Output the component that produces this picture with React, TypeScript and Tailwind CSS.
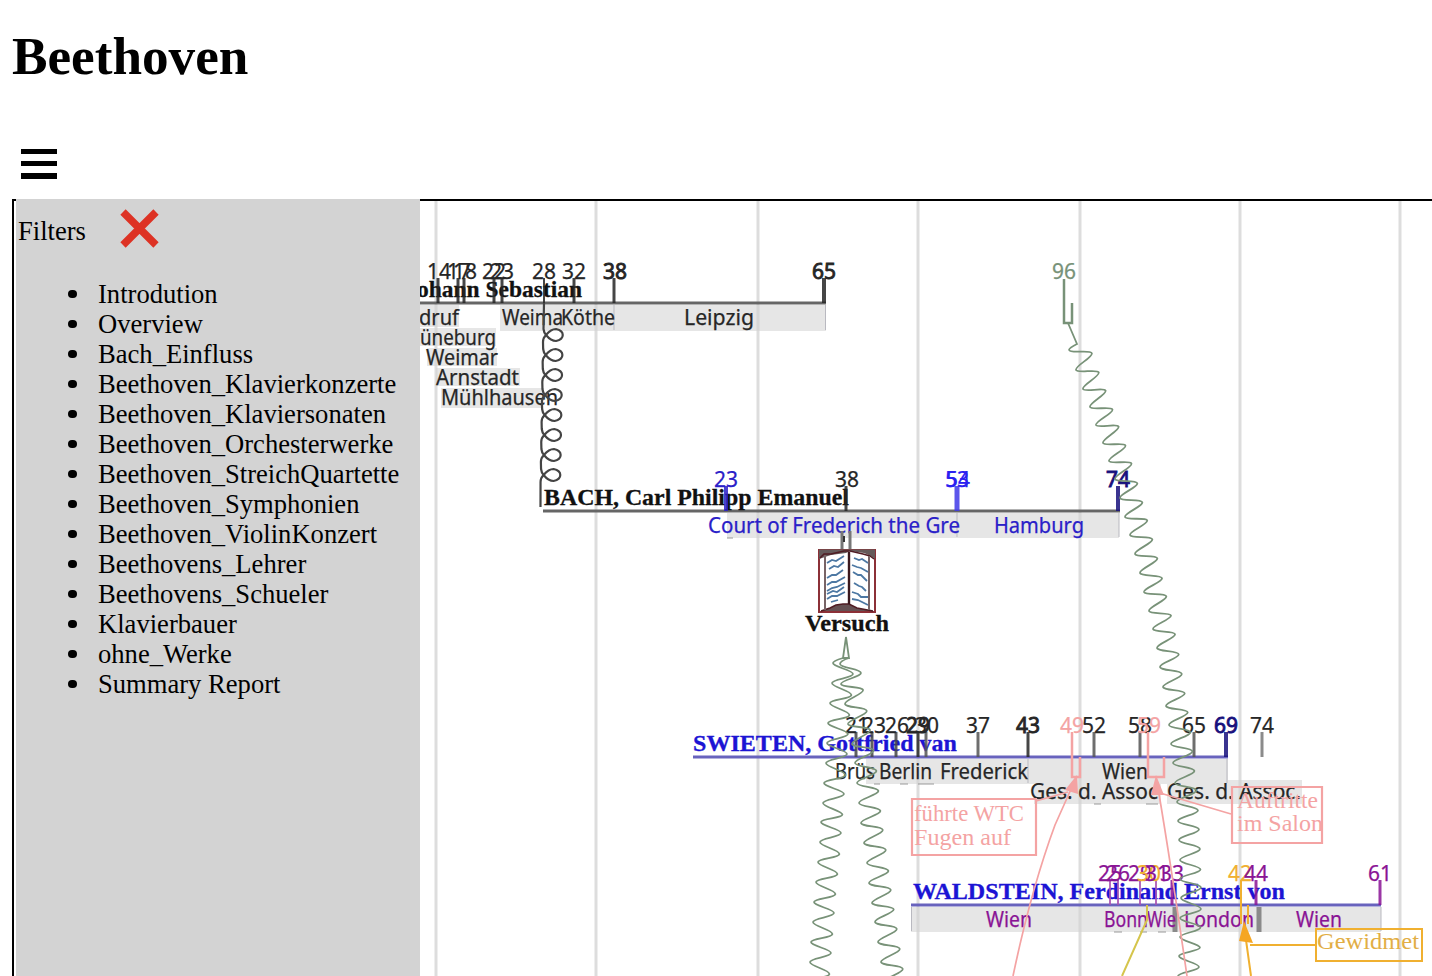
type Label = [text: string, x: number, y: number, width: number, color?: string]
type Point = [x: number, y: number]

const INK = "#262626"
const BLUE = "#2a20c8"
const NAVY = "#17107c"
const PURPLE = "#8a1495"
const PINK = "#f4a3a3"
const GREEN = "#789278"
const GOLD = "#f0b030"

const filters = [
  "Introdution",
  "Overview",
  "Bach_Einfluss",
  "Beethoven_Klavierkonzerte",
  "Beethoven_Klaviersonaten",
  "Beethoven_Orchesterwerke",
  "Beethoven_StreichQuartette",
  "Beethoven_Symphonien",
  "Beethoven_ViolinKonzert",
  "Beethovens_Lehrer",
  "Beethovens_Schueler",
  "Klavierbauer",
  "ohne_Werke",
  "Summary Report",
]

const gridLines = [436, 596, 758, 918, 1080, 1240, 1400]

// x, y, width, height
const bands = [
  [420, 305, 39, 22],
  [420, 328, 76, 18],
  [427, 348, 70, 18],
  [436, 368, 84, 18],
  [441, 388, 102, 20],
  [500, 305, 326, 26],
  [727, 513, 392, 25],
  [866, 759, 362, 25],
  [1034, 784, 127, 20],
  [1167, 780, 135, 24],
  [911, 907, 470, 25],
]

const names: Label[] = [
  ["ohann Sebastian", 417, 297, 165, "#111111"],
  ["BACH, Carl Philipp Emanuel", 544, 505, 305, "#111111"],
  ["Versuch", 805, 631, 84, "#111111"],
  ["SWIETEN, Gottfried van", 693, 751, 264, "#1c14d4"],
  ["WALDSTEIN, Ferdinand Ernst von", 913, 899, 372, "#1c14d4"],
]

const places: Label[] = [
  ["druf", 419, 325, 40],
  ["üneburg", 420, 345, 76],
  ["Weimar", 426, 365, 72],
  ["Arnstadt", 436, 385, 83],
  ["Mühlhausen", 441, 405, 117],
  ["Weima", 502, 325, 61],
  ["Köthe", 561, 325, 54],
  ["Leipzig", 684, 325, 70],
  ["Court of Frederich the Gre", 708, 533, 252, BLUE],
  ["Hamburg", 994, 533, 90, BLUE],
  ["Brüs", 835, 779, 40],
  ["Berlin", 879, 779, 53],
  ["Frederick", 940, 779, 88],
  ["Wien", 1102, 779, 46],
  ["Ges. d. Assoc", 1030, 799, 128],
  ["Ges. d. Assoc.", 1167, 799, 134],
  ["Wien", 986, 927, 46, PURPLE],
  ["Bonn", 1104, 927, 44, PURPLE],
  ["Wie", 1147, 927, 29, PURPLE],
  ["London", 1184, 927, 70, PURPLE],
  ["Wien", 1296, 927, 46, PURPLE],
]

// text, centre, baseline, colour, bold
const years: [string, number, number, string, boolean?][] = [
  ["14", 439, 279, INK],
  ["17", 459, 279, INK],
  ["18", 465, 279, INK],
  ["22", 494, 279, INK],
  ["23", 502, 279, INK],
  ["28", 544, 279, INK],
  ["32", 574, 279, INK],
  ["38", 615, 279, INK, true],
  ["65", 824, 279, INK, true],
  ["96", 1064, 279, GREEN],
  ["23", 726, 487, BLUE],
  ["38", 847, 487, INK],
  ["54", 958, 487, "#2a20f0"],
  ["53", 957, 487, "#2a20f0"],
  ["74", 1118, 487, NAVY, true],
  ["21", 857, 733, INK],
  ["23", 874, 733, INK],
  ["26", 897, 733, INK],
  ["29", 918, 733, INK, true],
  ["30", 927, 733, INK],
  ["37", 978, 733, INK],
  ["43", 1028, 733, INK, true],
  ["49", 1072, 733, PINK],
  ["52", 1094, 733, INK],
  ["58", 1140, 733, INK],
  ["59", 1149, 733, PINK],
  ["65", 1194, 733, INK],
  ["69", 1226, 733, NAVY, true],
  ["74", 1262, 733, INK],
  ["25", 1110, 881, PURPLE],
  ["26", 1118, 881, PURPLE],
  ["29", 1140, 881, PURPLE],
  ["30", 1149, 881, GOLD],
  ["31", 1157, 881, PURPLE],
  ["33", 1172, 881, PURPLE],
  ["42", 1240, 881, GOLD],
  ["44", 1256, 881, PURPLE],
  ["61", 1380, 881, PURPLE],
]

// x, top, colour, width
const ticks: [number, number, string, number][] = [
  [438, 278, INK, 3],
  [458, 278, INK, 3],
  [464, 278, INK, 3],
  [494, 278, INK, 3],
  [502, 278, INK, 3],
  [544, 278, INK, 2],
  [574, 278, INK, 3],
  [614, 278, INK, 3],
  [824, 278, INK, 4],
  [726, 486, BLUE, 4],
  [846, 486, INK, 3],
  [957, 486, "#4038e8", 5],
  [1118, 486, NAVY, 4],
  [856, 732, "#444444", 3],
  [872, 732, "#444444", 3],
  [896, 732, "#444444", 3],
  [918, 732, INK, 3],
  [926, 732, "#555555", 3],
  [978, 732, "#555555", 3],
  [1028, 732, INK, 3],
  [1094, 732, "#555555", 3],
  [1140, 732, "#555555", 3],
  [1194, 732, "#555555", 3],
  [1226, 732, NAVY, 4],
  [1262, 732, "#777777", 3],
  [1110, 880, "#a850b0", 2],
  [1118, 880, "#a850b0", 2],
  [1140, 880, "#a850b0", 2],
  [1156, 880, "#a850b0", 2],
  [1172, 880, PURPLE, 3],
  [1256, 880, PURPLE, 3],
  [1380, 880, PURPLE, 3],
]

const violinWave: Point[] = [
  [1069, 350], [1076, 370], [1083, 389], [1090, 407], [1096, 425], [1103, 443],
  [1109, 461], [1115, 479], [1120, 498], [1125, 517], [1130, 535], [1135, 554],
  [1140, 573], [1144, 592], [1149, 611], [1153, 629], [1157, 648], [1160, 667],
  [1163, 687], [1166, 706], [1169, 725], [1171, 744], [1173, 763], [1175, 783],
  [1177, 802], [1178, 821], [1179, 840], [1180, 860], [1180, 879], [1181, 898],
  [1180, 918], [1180, 937], [1179, 956], [1178, 976],
]
const leftWave: Point[] = [
  [833, 663], [832, 683], [830, 703], [828, 723], [827, 743], [826, 763],
  [824, 783], [823, 803], [821, 822], [820, 842], [818, 862], [816, 882],
  [814, 902], [813, 922], [811, 942], [810, 962], [808, 982],
]
const rightWave: Point[] = [
  [840, 664], [841, 684], [845, 704], [848, 724], [852, 744], [855, 763],
  [857, 783], [859, 803], [861, 823], [864, 843], [867, 863], [869, 883],
  [872, 903], [875, 922], [878, 942], [881, 962], [884, 982],
]

// Waves through the given left crests; the right crests stand square to the run.
const wavePath = (crests: Point[], size = 20.5) => {
  let d = `M${crests[0][0]} ${crests[0][1]}`
  for (let i = 0; i < crests.length - 1; i++) {
    const [x1, y1] = crests[i]
    const [x2, y2] = crests[i + 1]
    const dx = x2 - x1
    const dy = y2 - y1
    const len = Math.hypot(dx, dy)
    const rx = (x1 + x2) / 2 + (size * dy) / len
    const ry = (y1 + y2) / 2 - (size * dx) / len
    const tx = dx * 0.2
    const ty = dy * 0.2
    d += `C${x1 + tx} ${y1 + ty} ${rx - tx} ${ry - ty} ${rx} ${ry}`
    d += `C${rx + tx} ${ry + ty} ${x2 - tx} ${y2 - ty} ${x2} ${y2}`
  }
  return d
}

const coilPath = () => {
  let d = "M544 303"
  for (let i = 0; i < 8; i++) {
    const x = 544 - i * 0.35
    const y = 335 + i * 20
    d += `L${x - 0.5} ${y - 6}Q${x} ${y - 2} ${x + 2} ${y}`
    d += `Q${x + 7} ${y + 6} ${x + 12} ${y + 6}`
    d += `C${x + 21} ${y + 4} ${x + 21} ${y - 4} ${x + 12} ${y - 6}`
    d += `Q${x + 7} ${y - 6} ${x + 2} ${y}Q${x - 1} ${y + 3} ${x - 1} ${y + 7}`
  }
  return d + "L540.5 507"
}

const Book = () => (
  <g fill="none">
    <path d="M842 531V550M850 531V550" stroke="#777" strokeWidth="3" />
    <path d="M844 536V542" stroke="#333" strokeWidth="2" />
    <path d="M819 550H875V612H819Z" fill="#fff" stroke="#8c3037" strokeWidth="2" />
    <path d="M819 549.500H875V559Q870 555 864 553L850 551L846 553L831 555L819 559Z" fill="#655a5a" />
    <path d="M821 611L830 608L836 605L843 604L849 604L857 608L873 611Z" fill="#655052" />
    <path d="M820 558L824 554L831 554L844 551H850L863 554L870 556L874 559" stroke="#501c23" strokeWidth="1.5" />
    <path d="M821 611L830 608L836 605L843 604L849 604L857 608L873 611" stroke="#501c23" strokeWidth="1.5" />
    <path d="M849 552V604" stroke="#3b181d" strokeWidth="2.4" />
    <path d="M825 555V610M869 556V610" stroke="#786466" strokeWidth="2" />
    <path
      d="M827 563L832 560L836 561L844 556M829 569L834 566L838 567L844 562M827 578L832 575L836 575L843 570M827 585L832 582L836 582L845 577M827 591L832 588L837 587L845 583M827 594L833 591L837 592L844 587M827 599L832 596L837 596L845 592M831 602L838 600M854 558L859 560L862 559L868 563M852 565L857 567L861 568L868 572M853 572L858 575L861 575L867 581M854 583L859 586L862 587L866 591M852 592L858 594L861 597L868 597M852 599L858 600L862 602L868 605"
      stroke="#4d78a3"
      strokeWidth="1.8"
    />
  </g>
)

const Chart = () => (
  <svg className="block h-[775px] w-[1012px] shrink-0" viewBox="420 201 1012 775">
    {bands.map(([x, y, width, height]) => (
      <rect key={`${x}-${y}`} x={x} y={y} width={width} height={height} fill="#e6e6e6" />
    ))}
    {gridLines.map((x) => (
      <path key={x} d={`M${x} 201V976`} stroke="#d2d2d2" strokeOpacity="0.75" strokeWidth="3" />
    ))}

    <g fill="none" strokeWidth="3">
      <path d="M420 303H826M543 511H1120" stroke="#666" />
      <path d="M693 757H1228M911 905H1381" stroke="#6863bd" />
      <path d="M1175 907V932M1259 907V932" stroke="#8a8a8a" strokeWidth="5" />
      <path d="M614 305V330M825.500 305V330M957 513V537M1119 513V537M1028 759V783M1227 759V783M1381 907V931M911.500 907V931" stroke="#b9b9c0" strokeWidth="1" />
      <path d="M727 538H733M874 784H880M900 784H908M918 784H934M1094 804H1101M1146 804H1158M1114 932H1122M1140 932H1147M1158 932H1166" stroke="#999" strokeWidth="1" />
    </g>

    {names.map(([text, x, y, width, color]) => (
      <text
        key={text}
        x={x}
        y={y}
        textLength={width}
        lengthAdjust="spacingAndGlyphs"
        fill={color}
        stroke={color}
        strokeWidth="0.3"
        className="font-['Liberation_Serif',serif] text-[24px] font-bold"
      >
        {text}
      </text>
    ))}
    {ticks.map(([x, y, color, width]) => (
      <path key={`${x}-${y}`} d={`M${x} ${y}V${y + 25}`} stroke={color} strokeWidth={width} strokeOpacity="0.85" />
    ))}
    {places.map(([text, x, y, width, color = INK]) => (
      <text
        key={`${text}-${x}`}
        x={x}
        y={y}
        textLength={width}
        lengthAdjust="spacingAndGlyphs"
        fill={color}
        stroke={color}
        strokeWidth="0.25"
        className="font-['Noto_Sans',sans-serif] text-[21px]"
      >
        {text}
      </text>
    ))}
    {years.map(([text, x, y, color, bold]) => (
      <text
        key={`${x}-${y}`}
        x={x - 12}
        y={y}
        textLength={24}
        lengthAdjust="spacingAndGlyphs"
        fill={color}
        stroke={color}
        strokeWidth={bold ? 0.9 : 0.25}
        className="font-['Noto_Sans',sans-serif] text-[22px]"
      >
        {text}
      </text>
    ))}

    <path d={coilPath()} fill="none" stroke="#444" strokeWidth="2.2" />

    <g fill="none" stroke={GREEN} strokeWidth="1.8">
      <path d="M1064 279V323H1072V303" strokeWidth="2.500" />
      <path d="M1068 323L1077 344Q1069 348 1069 350" />
      <path d={wavePath(violinWave)} />
      <path d="M846 637L843 658M846 637L849 658H843Q833 661 833 663M849 658Q840 661 840 664" />
      <path d={wavePath(leftWave)} />
      <path d={wavePath(rightWave)} />
    </g>

    <Book />

    <g fill="none" stroke={PINK} strokeWidth="1.7">
      <path d="M1072 732V777H1080V757M1148 732V777H1164V757" strokeWidth="2.500" />
      <path d="M912 799H1036V855H912ZM1232 787H1322V843H1232Z" strokeWidth="2.200" />
      <path d="M1013 976Q1031 890 1055 825L1072 787M1158 788Q1171 865 1187 976M1160 793L1231 814M1036 801L1068 792" />
      <path d="M1077 775L1065 790L1078 794ZM1156 775L1151 795L1164 795Z" fill={PINK} stroke="none" />
    </g>
    <g className="font-['Liberation_Serif',serif] text-[24px]" fill={PINK}>
      <text x="914" y="821" textLength="110" lengthAdjust="spacingAndGlyphs">führte WTC</text>
      <text x="914" y="845" textLength="97" lengthAdjust="spacingAndGlyphs">Fugen auf</text>
      <text x="1237" y="808" textLength="81" lengthAdjust="spacingAndGlyphs">Auftritte</text>
      <text x="1237" y="831" textLength="86" lengthAdjust="spacingAndGlyphs">im Salon</text>
    </g>

    <g fill="none" stroke={GOLD} strokeWidth="2">
      <path d="M1122 976L1147 920V905" stroke="#d5c54c" />
      <path d="M1241 880V924M1248 905V924M1251 976L1246 940M1250 945H1315" />
      <path d="M1316 929H1422V961H1316Z" />
      <path d="M1244 921L1239 941L1253 943Z" fill="#f5a623" stroke="none" />
    </g>
    <text
      x="1317"
      y="949"
      textLength="102"
      lengthAdjust="spacingAndGlyphs"
      fill="#e2ae45"
      className="font-['Liberation_Serif',serif] text-[24px]"
    >
      Gewidmet
    </text>
  </svg>
)

const Sidebar = () => (
  <aside className="-mt-0.5 ml-0.5 w-[404px] shrink-0 bg-[#d3d3d3]">
    <div className="flex items-start pt-[10px] pl-0.5">
      <span className="mt-[7px] w-[102px] leading-[30px]">Filters</span>
      <button type="button" aria-label="Close filters">
        <svg className="block size-[39px]" viewBox="0 0 39 39">
          <path d="M3 3L36 36M36 3L3 36" stroke="#dd3224" strokeWidth="7.500" />
        </svg>
      </button>
    </div>
    <ul className="mt-[31px] pl-[52px] leading-[30px]">
      {filters.map((item) => (
        <li
          key={item}
          className="flex items-center before:mr-[21.5px] before:size-[8.5px] before:rounded-full before:bg-black"
        >
          {item}
        </li>
      ))}
    </ul>
  </aside>
)

export default function App() {
  return (
    <main className="flex h-[976px] w-[1432px] flex-col overflow-hidden bg-white pl-3 font-['Liberation_Serif',serif] text-[26.6px] text-black">
      <h1 className="mt-[27px] text-[53.2px] leading-[60px] font-bold">Beethoven</h1>
      <button type="button" aria-label="Menu" className="mt-[62px] ml-[9px] flex w-9 flex-col gap-[7px]">
        <span className="h-[5px] w-full bg-black" />
        <span className="h-[5px] w-full bg-black" />
        <span className="h-[6px] w-full bg-black" />
      </button>
      <section className="mt-5 flex h-[777px] w-[1420px] shrink-0 border-t-2 border-l-2 border-black">
        <Sidebar />
        <Chart />
      </section>
    </main>
  )
}
